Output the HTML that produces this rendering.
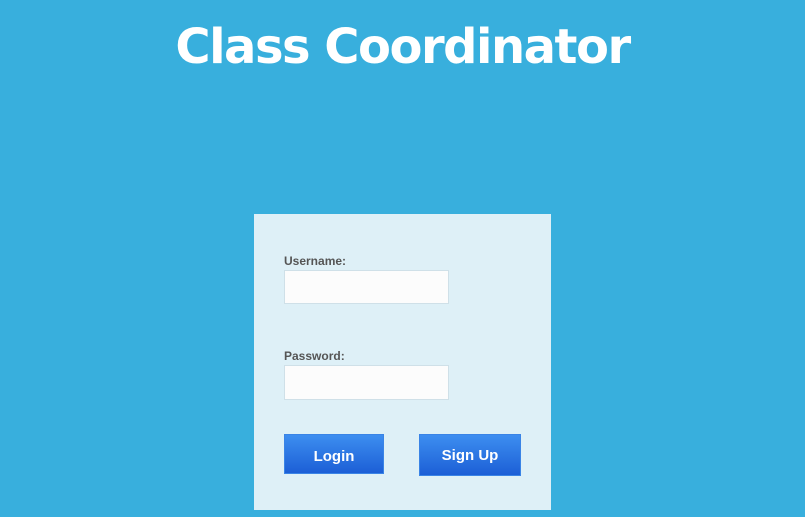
<!DOCTYPE html>
<html><head><style>
body{margin:0;width:805px;height:517px;background:#38afdd;overflow:hidden;position:relative;font-family:"Liberation Sans",Arial,sans-serif}
h1{position:absolute;top:19px;left:0;width:805px;margin:0;text-align:center;color:#fff;font:bold 48px "DejaVu Sans",Verdana,sans-serif;letter-spacing:-1.5px}
.panel{position:absolute;left:254px;top:214px;width:297px;height:296px;background:#def0f7}
.lbl{position:absolute;left:30px;font-weight:bold;font-size:12px;color:#555}
.in{position:absolute;left:30px;width:165px;height:32px;background:#fcfcfc;border:1px solid #cfe0e8;box-sizing:border-box}
.btn{position:absolute;top:220px;background:linear-gradient(#3d8ef0,#1c5fd6);border:1px solid #3a84e6;box-sizing:border-box;color:#fff;font-weight:bold;font-size:15px;text-align:center}
</style></head><body>
<h1>Class Coordinator</h1>
<div class="panel">
<div class="lbl" style="top:40px">Username:</div>
<div class="in" style="top:56px;height:34px"></div>
<div class="lbl" style="top:135px">Password:</div>
<div class="in" style="top:151px;height:35px"></div>
<div class="btn" style="left:30px;width:100px;height:40px;line-height:43px">Login</div>
<div class="btn" style="left:165px;width:102px;height:42px;line-height:42px">Sign Up</div>
</div>
</body></html>
